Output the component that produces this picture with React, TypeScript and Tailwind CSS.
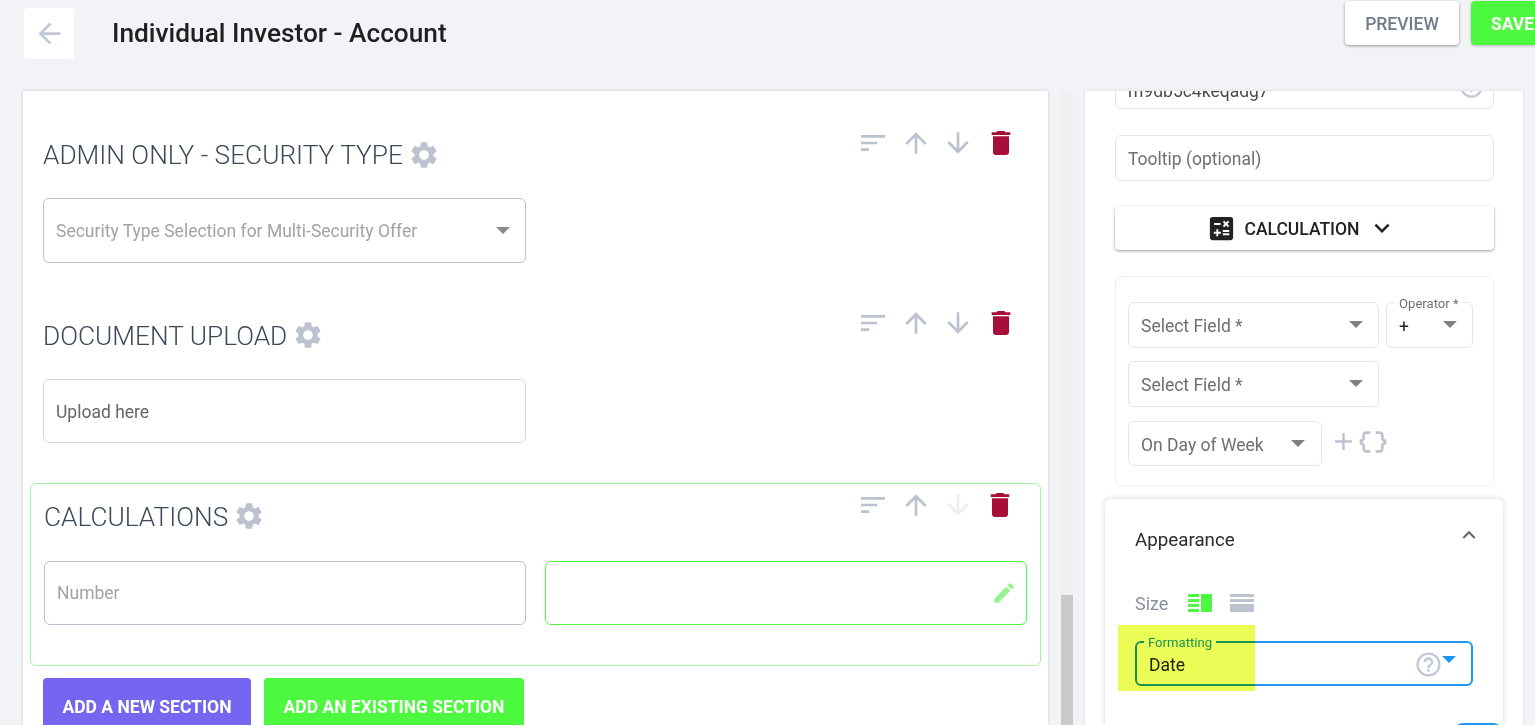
import React from "react";
import {
  MdAdd, MdArrowBack, MdArrowDownward, MdArrowUpward, MdCalculate, MdDataObject, MdDelete, MdEdit,
  MdExpandLess, MdExpandMore, MdHelpOutline, MdInfoOutline, MdSettings, MdSort,
} from "react-icons/md";

const Caret = ({ className = "text-[#808080]" }: { className?: string }) => (
  <svg width="14" height="7" viewBox="0 0 14 7" className={`shrink-0 ${className}`}>
    <path d="M0 0h14L7 7z" fill="currentColor" />
  </svg>
);

const Toolbar = ({ dimDown = false, tight = false }: { dimDown?: boolean; tight?: boolean }) => (
  <div className={`flex shrink-0 text-[#bcc2d0] ${tight ? "gap-[10px]" : "gap-[10.5px]"}`}>
    <MdSort size={32} className="-translate-x-px" />
    <MdArrowUpward size={32} />
    <MdArrowDownward size={32} className={dimDown ? "text-[#eceef2]" : "-translate-x-px"} />
    <MdDelete size={32} className="text-[#a80f38]" />
  </div>
);

const Title = ({ children, low = false }: { children: React.ReactNode; low?: boolean }) => (
  <div className="flex items-center mt-[10px] h-[36px]">
    <span className={`text-[26.25px] font-light leading-[36px] text-[#3d4858] ${low ? "pt-[2px]" : ""}`}>{children}</span>
    <MdSettings size={32} className="ml-[5px] text-[#bcc2d0]" />
  </div>
);

const Select = ({ label, w }: { label: string; w: string }) => (
  <div className={`flex items-center justify-between h-[46px] pl-[12px] pr-[15px] border border-[#e4e6eb] rounded-[6px] text-[17.5px] text-[#6f6f6f] ${w}`}>
    <span className="mt-[2px]">{label}</span>
    <Caret className="-mt-[2px] text-[#808080]" />
  </div>
);

export default function App() {
  return (
    <div className="relative h-[725px] w-[1535px] overflow-hidden bg-[#f1f3f7] font-['Roboto',sans-serif]">
      <header className="flex h-[91px] w-[1535px] items-start">
        <div className="ml-[24px] mt-[8px] flex h-[51px] w-[50px] shrink-0 items-center justify-center rounded-[4px] bg-white text-[#c3c9da]">
          <MdArrowBack size={33} />
        </div>
        <h1 className="ml-[38px] mt-[15px] flex-1 whitespace-nowrap text-[26.25px] leading-[36px] font-medium text-[#1f1f1f]">Individual Investor - Account</h1>
        <button className="mt-[1px] h-[44px] w-[114px] shrink-0 rounded-[4px] bg-white pt-[2px] text-[17.5px] font-medium text-[#717b8a] shadow-[0_1px_3px_rgba(0,0,0,0.4)]">PREVIEW</button>
        <div className="ml-[12px] mt-[1px] h-[44px] w-[64px] shrink-0">
          <button className="h-[44px] w-[90px] rounded-[4px] bg-[#4cf93f] pl-[20px] pt-[2px] text-left text-[17.5px] font-bold text-white shadow-[0_1px_3px_rgba(0,0,0,0.25)]">SAVE</button>
        </div>
      </header>

      <main className="flex h-[634px]">
        <section className="ml-[23px] w-[1025px] shrink-0 overflow-hidden bg-white shadow-[0_0_3px_rgba(0,0,0,0.18)]">
          <div className="mt-[36px] flex items-start justify-between pl-[20px] pr-[31px]">
            <Title>ADMIN ONLY - SECURITY TYPE</Title>
            <Toolbar />
          </div>
          <div className="ml-[20px] mt-[25px] flex h-[65px] w-[483px] items-center justify-between rounded-[6px] border border-[#bcc1d1] pl-[12px] pr-[15px] text-[17.5px] text-[#a3a3a3]">
            <span className="mt-[2px]">Security Type Selection for Multi-Security Offer</span>
            <Caret className="text-[#8a8a8a]" />
          </div>

          <div className="mt-[44px] flex items-start justify-between pl-[20px] pr-[31px]">
            <Title low>DOCUMENT UPLOAD</Title>
            <Toolbar />
          </div>
          <div className="ml-[20px] mt-[26px] flex h-[64px] w-[483px] items-center rounded-[6px] border border-[#d5d8e0] pl-[12px] pt-[2px] text-[17.5px] text-[#666]">Upload here</div>

          <div className="ml-[7px] mt-[40px] w-[1011px] rounded-[6px] border border-[#a3f59a] pb-[40px] pl-[13px] pr-[13px] pt-[5px]">
            <div className="flex items-start justify-between pr-[11px]">
              <div className="-mt-px"><Title low>CALCULATIONS</Title></div>
              <Toolbar dimDown tight />
            </div>
            <div className="mt-[27px] flex gap-[19px]">
              <div className="flex h-[64px] w-[482px] items-center rounded-[6px] border border-[#bcc1d1] pl-[12px] pt-[1px] text-[17.5px] text-[#a3a3a3]">Number</div>
              <div className="flex h-[64px] w-[482px] items-center justify-end rounded-[6px] border border-[#4cf93f] pr-[9px] text-[#96f58e]">
                <MdEdit size={26} />
              </div>
            </div>
          </div>

          <div className="ml-[20px] mt-[12px] flex gap-[13px]">
            <button className="h-[58px] w-[208px] rounded-[4px] bg-[#7565f0] text-[17.5px] font-bold text-white">ADD A NEW SECTION</button>
            <button className="h-[58px] w-[260px] rounded-[4px] bg-[#4cf93f] text-[17.5px] font-bold text-white">ADD AN EXISTING SECTION</button>
          </div>
        </section>

        <div className="ml-[13px] flex w-[12px] shrink-0 flex-col justify-end bg-[#f0f0f0]">
          <div className="h-[130px] bg-[#cacaca]" />
        </div>

        <aside className="ml-[12px] w-[438px] shrink-0 overflow-hidden bg-white shadow-[0_0_3px_rgba(0,0,0,0.12)]">
          <div className="-mt-[28px] pl-[30px] pr-[29px]">
            <div className="flex h-[46px] items-center justify-between rounded-[6px] border border-[#e4e6eb] pl-[12px] pr-[8px] text-[17.5px] text-[#4a4a4a]">
              <span className="mt-[11px]">m9db5c4keqadg7</span>
              <MdInfoOutline size={27} className="text-[#c3c8d8]" />
            </div>
            <div className="mt-[26px] flex h-[46px] items-center rounded-[6px] border border-[#e4e6eb] pl-[12px] pt-[2px] text-[17.5px] text-[#6f6f6f]">Tooltip (optional)</div>
            <button className="mt-[25px] flex h-[44px] w-full items-center justify-center rounded-[4px] bg-white pr-[3px] text-[17.5px] font-medium text-[#222] shadow-[0_1px_3px_rgba(0,0,0,0.4)]">
              <MdCalculate size={31} className="-ml-[3px]" />
              <span className="ml-[7px] mt-[2px]">CALCULATION</span>
              <MdExpandMore size={30} className="ml-[7px]" />
            </button>

            <div className="mt-[26px] h-[210px] rounded-[6px] border border-[#eceef2] pl-[12px] pt-[25px]">
              <div className="flex gap-[7px]">
                <Select label="Select Field *" w="w-[251px]" />
                <div className="relative flex h-[46px] w-[87px] items-center justify-between rounded-[6px] border border-[#e4e6eb] pl-[12px] pr-[15px]">
                  <span className="mt-[4px] text-[17.5px] text-[#222]">+</span>
                  <Caret className="-mt-[2px] text-[#808080]" />
                  <span className="absolute -top-[7px] left-[8px] bg-white px-[4px] text-[13.125px] leading-[16px] whitespace-nowrap text-[#707070]">Operator *</span>
                </div>
              </div>
              <div className="mt-[13px]"><Select label="Select Field *" w="w-[251px]" /></div>
              <div className="mt-[14px] flex items-center">
                <div className="flex h-[45px] w-[194px] items-center justify-between rounded-[6px] border border-[#e4e6eb] pl-[12px] pr-[16px] text-[17.5px] text-[#6f6f6f]">
                  <span className="mt-[3px]">On Day of Week</span>
                  <Caret />
                </div>
                <MdAdd size={29} className="ml-[7px] -mt-[4px] text-[#bcc2d0]" />
                <MdDataObject size={32} className="-ml-[1px] -mt-[3px] text-[#bcc2d0]" />
              </div>
            </div>

            <div className="relative -ml-[10px] mt-[13px] w-[398px] rounded-[6px] bg-white pt-[26px] shadow-[0_0_6px_rgba(0,0,0,0.16)]">
              <div className="flex h-[28px] items-center justify-between pl-[30px] pr-[21px]">
                <span className="mt-[2px] text-[18.75px] text-[#2b2b2b]">Appearance</span>
                <MdExpandLess size={26} className="-mt-[8px] text-[#666]" />
              </div>
              <div className="mt-[38px] flex h-[24px] items-center pl-[30px]">
                <span className="text-[18px] text-[#8a90a2]">Size</span>
                <svg width="24" height="18" viewBox="0 0 24 18" className="ml-[20px] text-[#4cf93f]">
                  <path fill="currentColor" d="M0 0h11v3H0zM0 5h11v3H0zM0 10h11v3H0zM0 15h11v3H0zM13 0h11v18H13z" />
                </svg>
                <svg width="24" height="18" viewBox="0 0 24 18" className="ml-[18px] text-[#bcc2d0]">
                  <path fill="currentColor" d="M0 0h24v3H0zM0 5h24v3H0zM0 10h24v8H0z" />
                </svg>
              </div>
              <div className="relative ml-[30px] mt-[26px] flex h-[45px] w-[338px] items-center justify-end rounded-[6px] border-2 border-[#2196f3] pr-[15px]">
                <span className="absolute left-[12px] top-[10px] text-[17.5px] leading-[24px] text-[#222]">Date</span>
                <span className="absolute -top-[8px] left-[7px] bg-white px-[4px] text-[13.125px] leading-[16px] text-[#2196f3]">Formatting</span>
                <MdHelpOutline size={29} className="mt-[1px] text-[#c3c8d8]" />
                <Caret className="-mt-[8px] -ml-[1px] text-[#2196f3]" />
                <div className="absolute -left-[19px] -top-[18px] h-[66px] w-[137px] bg-[#eafc55] mix-blend-multiply" />
              </div>
              <div className="mt-[37px] flex justify-end">
                <div className="h-[10px] w-[50px] rounded-t-full bg-[#2196f3]" />
              </div>
            </div>
          </div>
        </aside>
      </main>
    </div>
  );
}
